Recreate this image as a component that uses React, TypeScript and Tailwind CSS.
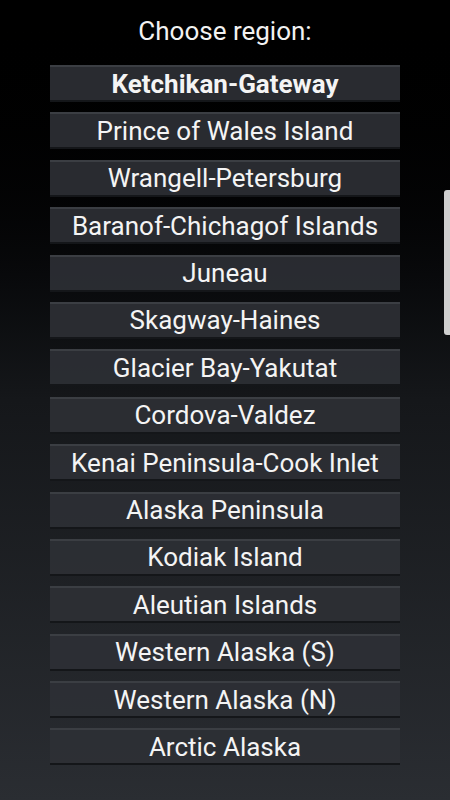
const regions = [
  "Ketchikan-Gateway",
  "Prince of Wales Island",
  "Wrangell-Petersburg",
  "Baranof-Chichagof Islands",
  "Juneau",
  "Skagway-Haines",
  "Glacier Bay-Yakutat",
  "Cordova-Valdez",
  "Kenai Peninsula-Cook Inlet",
  "Alaska Peninsula",
  "Kodiak Island",
  "Aleutian Islands",
  "Western Alaska (S)",
  "Western Alaska (N)",
  "Arctic Alaska",
];

export default function App() {
  return (
    <div
      className="relative h-[800px] w-[450px] overflow-hidden bg-gradient-to-b from-[#000000] via-[#15171a] to-[#2a2d32] text-white"
      style={{ fontFamily: "Roboto, 'Noto Sans', sans-serif" }}
    >
      <div className="flex h-[65px] items-start justify-center pt-[15px] text-[26px] leading-[32px] text-[#f2f2f2]">
        Choose region:
      </div>
      <div className="flex flex-col gap-[10.4px] px-[50px]">
        {regions.map((r, i) => (
          <button
            key={r}
            type="button"
            className={
              "flex h-[37px] items-center justify-center whitespace-nowrap border-t-2 border-b-2 border-t-[#3b3e43] border-b-[#141619] bg-[#2e3035]/90 text-[26px] leading-none text-[#f4f4f4] " +
              (i === 0 ? "font-bold" : "font-normal")
            }
          >
            {r}
          </button>
        ))}
      </div>
      <div className="absolute right-0 top-[190px] h-[145px] w-[6px] rounded-l-[3px] bg-[#cfcfcf]" />
    </div>
  );
}
